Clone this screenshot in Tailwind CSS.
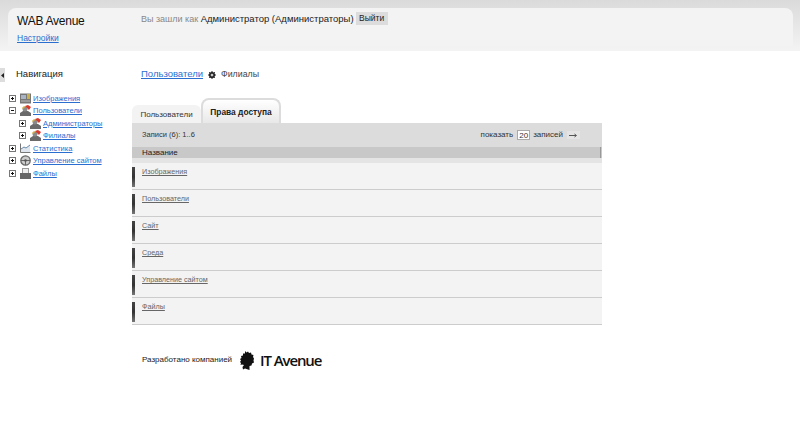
<!DOCTYPE html>
<html lang="en">
<head>
    <meta charset="UTF-8">
    <title>WAB Avenue</title>
    <script src="https://cdn.jsdelivr.net/npm/@tailwindcss/browser@4"></script>
</head>
<body class="bg-white text-[#333] overflow-hidden font-['Liberation_Sans',sans-serif]">
<div class="w-[800px] h-[438px] relative">

    <!-- Header -->
    <header class="h-[51px] pt-2 px-2 pr-[7px] bg-linear-to-b from-[#dadada] to-[#f4f4f4]">
        <div class="h-[38px] rounded-t-lg bg-[#f3f3f3] flex pl-[9px]">
            <div class="w-[124px] shrink-0">
                <div class="text-[12px] leading-4 text-[#111] pt-[5px] tracking-[-0.25px]">WAB Avenue</div>
                <a href="#" class="text-[8.5px] leading-3 text-[#2a6fd0] underline block mt-[3px]">Настройки</a>
            </div>
            <div class="flex items-start pt-[4px] text-[9.5px] leading-[14px]">
                <span class="text-[#888] text-[9px]">Вы зашли как&nbsp;</span>
                <span class="text-[#222]">Администратор (Администраторы)</span>
                <button class="ml-[2px] h-[13px] w-[32px] bg-[#dcdcdc] text-[8.5px] leading-[13px] text-[#222]">Выйти</button>
            </div>
        </div>
    </header>

    <div class="flex">
        <!-- Sidebar -->
        <aside class="w-[132px] shrink-0 relative pt-[16px]">
            <div class="absolute left-0 top-[17px] w-[5px] h-[14px] bg-[#ddd] flex items-center justify-center">
                <svg width="4" height="5" viewBox="0 0 4 5"><path d="M0 2.500 3 0v5z" fill="#222"/></svg>
            </div>
            <div class="pl-[16px] text-[9.5px] leading-[13px] text-[#222]">Навигация</div>
            <ul class="mt-[12px] pl-[9px] text-[7.5px] text-[#2a6fd0]">
                <li class="h-[12.5px] flex items-center">
                    <svg class="mr-[4px]" width="7" height="7" viewBox="0 0 7 7"><rect x=".5" y=".5" width="6" height="6" fill="#fff" stroke="#777"/><path d="M2 3.500h3M3.500 2v3" stroke="#111"/></svg>
                    <svg class="mr-[2px]" width="11" height="11" viewBox="0 0 11 11"><rect width="11" height="10" y=".5" fill="#777"/><rect x="1" y="2" width="5" height="4" fill="#a8b4c4"/><rect x="7" y="1" width="3" height="5" fill="#c8b04a"/><rect x="1" y="7" width="9" height="2" fill="#999"/></svg>
                    <a href="#" class="underline">Изображения</a>
                </li>
                <li class="h-[12.5px] flex items-center">
                    <svg class="mr-[4px]" width="7" height="7" viewBox="0 0 7 7"><rect x=".5" y=".5" width="6" height="6" fill="#fff" stroke="#777"/><path d="M2 3.500h3" stroke="#111"/></svg>
                    <svg class="mr-[2px]" width="11" height="11" viewBox="0 0 11 11"><path d="M0 11V8l3-2h5l3 2v3z" fill="#6a6a6a"/><circle cx="5" cy="4" r="2.500" fill="#8a8a8a"/><path d="M5 1l3-1 3 2-2 3z" fill="#d8382c"/><path d="M2 3l2-2 1 1-2 2z" fill="#e0b030"/></svg>
                    <a href="#" class="underline">Пользователи</a>
                </li>
                <li class="h-[12.5px] flex items-center pl-[10px]">
                    <svg class="mr-[4px]" width="7" height="7" viewBox="0 0 7 7"><rect x=".5" y=".5" width="6" height="6" fill="#fff" stroke="#777"/><path d="M2 3.500h3M3.500 2v3" stroke="#111"/></svg>
                    <svg class="mr-[2px]" width="11" height="11" viewBox="0 0 11 11"><path d="M0 11V8l3-2h5l3 2v3z" fill="#6a6a6a"/><circle cx="5" cy="4" r="2.500" fill="#8a8a8a"/><path d="M5 1l3-1 3 2-2 3z" fill="#d8382c"/><path d="M2 3l2-2 1 1-2 2z" fill="#e0b030"/></svg>
                    <a href="#" class="underline">Администраторы</a>
                </li>
                <li class="h-[12.5px] flex items-center pl-[10px]">
                    <svg class="mr-[4px]" width="7" height="7" viewBox="0 0 7 7"><rect x=".5" y=".5" width="6" height="6" fill="#fff" stroke="#777"/><path d="M2 3.500h3M3.500 2v3" stroke="#111"/></svg>
                    <svg class="mr-[2px]" width="11" height="11" viewBox="0 0 11 11"><path d="M0 11V8l3-2h5l3 2v3z" fill="#6a6a6a"/><circle cx="5" cy="4" r="2.500" fill="#8a8a8a"/><path d="M5 1l3-1 3 2-2 3z" fill="#d8382c"/><path d="M2 3l2-2 1 1-2 2z" fill="#e0b030"/></svg>
                    <a href="#" class="underline">Филиалы</a>
                </li>
                <li class="h-[12.5px] flex items-center">
                    <svg class="mr-[4px]" width="7" height="7" viewBox="0 0 7 7"><rect x=".5" y=".5" width="6" height="6" fill="#fff" stroke="#777"/><path d="M2 3.500h3M3.500 2v3" stroke="#111"/></svg>
                    <svg class="mr-[2px]" width="11" height="11" viewBox="0 0 11 11"><path d="M.5.5v9h10" fill="none" stroke="#777"/><path d="M1 9V6l3-2 2 1 4-3v7z" fill="#dfe6ee"/><path d="M1 6l3-2 2 1 4-3" fill="none" stroke="#6a8aa8"/></svg>
                    <a href="#" class="underline">Статистика</a>
                </li>
                <li class="h-[12.5px] flex items-center">
                    <svg class="mr-[4px]" width="7" height="7" viewBox="0 0 7 7"><rect x=".5" y=".5" width="6" height="6" fill="#fff" stroke="#777"/><path d="M2 3.500h3M3.500 2v3" stroke="#111"/></svg>
                    <svg class="mr-[2px]" width="11" height="11" viewBox="0 0 11 11"><circle cx="5.500" cy="5.500" r="4.700" fill="#ccc" stroke="#666" stroke-width="1.300"/><path d="M1 5.500h9M5.500 5.500V10" stroke="#666"/><circle cx="5.500" cy="5.500" r="1.300" fill="#555"/></svg>
                    <a href="#" class="underline">Управление сайтом</a>
                </li>
                <li class="h-[12.5px] flex items-center">
                    <svg class="mr-[4px]" width="7" height="7" viewBox="0 0 7 7"><rect x=".5" y=".5" width="6" height="6" fill="#fff" stroke="#777"/><path d="M2 3.500h3M3.500 2v3" stroke="#111"/></svg>
                    <svg class="mr-[2px]" width="11" height="11" viewBox="0 0 11 11"><rect x="2.500" y=".5" width="6" height="5" fill="#eee" stroke="#999"/><rect y="5" width="11" height="6" fill="#666"/></svg>
                    <a href="#" class="underline">Файлы</a>
                </li>
            </ul>
        </aside>

        <!-- Main -->
        <main class="w-[470px] pt-[17px]">
            <div class="flex items-center h-[13px] pl-[9px]">
                <a href="#" class="text-[#2a6fd0] underline text-[9.5px]">Пользователи</a>
                <svg class="mx-[5px]" width="8" height="8" viewBox="0 0 8 8"><circle cx="4" cy="4" r="2.300" fill="none" stroke="#222" stroke-width="1.600"/><path d="M4 0v8M0 4h8M1.200 1.200l5.600 5.600M6.800 1.200 1.200 6.800" stroke="#222"/><circle cx="4" cy="4" r="1" fill="#fff"/></svg>
                <span class="text-[#444] text-[8.8px]">Филиалы</span>
            </div>

            <!-- Tabs -->
            <div class="flex items-end mt-[17px] h-[25px]">
                <div class="h-[18px] w-[69px] rounded-t-md bg-[#f3f3f3] text-[8px] leading-[19px] text-center text-[#333] whitespace-nowrap">Пользователи</div>
                <div class="h-[25px] w-[80px] rounded-t-lg border-2 border-b-0 border-[#dcdcdc] bg-linear-to-b from-white to-[#e8e8e8] text-[8.4px] leading-[24px] text-center font-bold text-[#222] whitespace-nowrap">Права доступа</div>
            </div>

            <!-- Toolbar -->
            <div class="h-[24px] bg-[#dcdcdc] flex items-center justify-between pl-[10px] pr-[22px] text-[7.5px] text-[#333]">
                <span>Записи (6): 1..6</span>
                <div class="flex items-center">
                    <span class="text-[8px]">показать</span>
                    <input value="20" class="w-[13px] h-[10px] ml-[4px] mr-[3px] bg-white border border-[#aaa] text-[8px] text-center leading-none outline-none">
                    <span class="text-[8px]">записей</span>
                    <span class="ml-[4px] w-[13px] h-[8px] bg-[#e4e4e4] flex items-center justify-center">
                        <svg width="9" height="5" viewBox="0 0 9 5"><path d="M0 2.500h7M5.500 1 7.500 2.500 5.500 4" fill="none" stroke="#555"/></svg>
                    </span>
                </div>
            </div>
            <div class="h-[11px] bg-[#c8c8c8] pl-[10px] text-[8px] leading-[11px] text-[#222] flex justify-between pr-[1px]">
                <span>Название</span>
                <span class="w-px bg-[#999]"></span>
            </div>
            <div class="h-[5px] bg-[#e4e4e4]"></div>

            <!-- Rows -->
            <div class="bg-[#f3f3f3] text-[7.2px] text-[#666]">
                <div class="h-[27px] border-b border-[#ccc] flex pl-[10px] relative"><span class="absolute left-0 top-[4px] w-[3px] h-[20px] bg-linear-to-b from-[#444] via-[#333] to-[#777]"></span><a href="#" class="underline pt-[4px]">Изображения</a></div>
                <div class="h-[27px] border-b border-[#ccc] flex pl-[10px] relative"><span class="absolute left-0 top-[4px] w-[3px] h-[20px] bg-linear-to-b from-[#444] via-[#333] to-[#777]"></span><a href="#" class="underline pt-[4px]">Пользователи</a></div>
                <div class="h-[27px] border-b border-[#ccc] flex pl-[10px] relative"><span class="absolute left-0 top-[4px] w-[3px] h-[20px] bg-linear-to-b from-[#444] via-[#333] to-[#777]"></span><a href="#" class="underline pt-[4px]">Сайт</a></div>
                <div class="h-[27px] border-b border-[#ccc] flex pl-[10px] relative"><span class="absolute left-0 top-[4px] w-[3px] h-[20px] bg-linear-to-b from-[#444] via-[#333] to-[#777]"></span><a href="#" class="underline pt-[4px]">Среда</a></div>
                <div class="h-[27px] border-b border-[#ccc] flex pl-[10px] relative"><span class="absolute left-0 top-[4px] w-[3px] h-[20px] bg-linear-to-b from-[#444] via-[#333] to-[#777]"></span><a href="#" class="underline pt-[4px]">Управление сайтом</a></div>
                <div class="h-[27px] border-b border-[#ccc] flex pl-[10px] relative"><span class="absolute left-0 top-[4px] w-[3px] h-[20px] bg-linear-to-b from-[#444] via-[#333] to-[#777]"></span><a href="#" class="underline pt-[4px]">Файлы</a></div>
            </div>

            <!-- Footer -->
            <div class="flex items-center pl-[10px] mt-[24px] h-[22px]">
                <span class="text-[8px] text-[#222] w-[90px] whitespace-nowrap">Разработано компанией</span>
                <svg class="ml-[8px]" width="14" height="19" viewBox="0 0 14 19"><path d="M5 0l1.500 1.500L8 .5l1 1.500 2-.5.5 2 2 .5-.5 2 1 1.500-.5 2 .5 2-2 1-.5 2-2 .5V19L5 17.500l-2 1-.5-2.500L4 14l-2-.5L.5 14 1 12 0 11l1-1.500L0 8l1.500-1L1 5l2-.5V2.500h2z" fill="#111"/></svg>
                <span class="ml-[6px] text-[15px] leading-none font-semibold text-[#111] font-['Open_Sans',sans-serif] tracking-[-1.1px] whitespace-nowrap">IT Avenue</span>
            </div>
        </main>
    </div>
</div>
</body>
</html>
